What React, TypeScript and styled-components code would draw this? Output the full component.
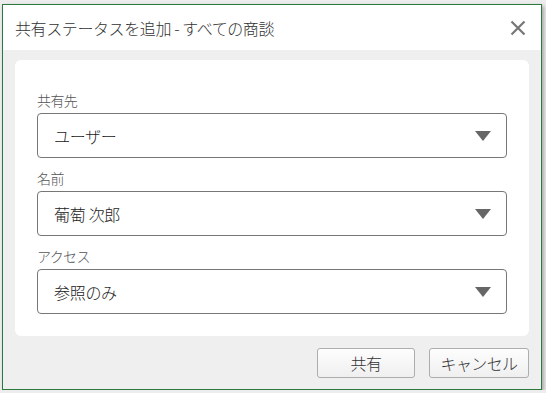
import styled, { createGlobalStyle } from 'styled-components'

const GlobalStyle = createGlobalStyle`
  html, body {
    margin: 0;
    padding: 0;
    background: #ededed;
  }
  * {
    box-sizing: border-box;
  }
`

const Window = styled.div`
  margin: 4px 0 0 2px;
  width: 540px;
  height: 386px;
  border: 1px solid #2b7a3d;
  background: #efefef;
  display: flex;
  flex-direction: column;
  box-shadow: 2px 2px 4px rgba(0, 0, 0, 0.3);
  font-family: 'Noto Sans CJK JP', 'Noto Sans', sans-serif;
  font-weight: 300;
`
const TitleBar = styled.div`
  height: 45px;
  background: #fff;
  display: flex;
  align-items: center;
  justify-content: space-between;
  padding: 0 14px 0 12px;
  flex-shrink: 0;
`
const Title = styled.div`
  font-size: 16px;
  line-height: 20px;
  color: #333;
  letter-spacing: -0.4px;
  margin-top: 1px;
`
const CloseBtn = styled.div`
  width: 18px;
  height: 18px;
  display: flex;
  align-items: center;
  justify-content: center;
`
const Body = styled.div`
  flex: 1;
  padding: 10px 12px 12px;
  display: flex;
  flex-direction: column;
  gap: 12px;
`
const Card = styled.div`
  background: #fff;
  border-radius: 6px;
  padding: 30px 22px 22px;
  display: flex;
  flex-direction: column;
`
const Field = styled.div<{ $first?: boolean }>`
  margin-top: ${(p) => (p.$first ? '0' : '10px')};
`
const Label = styled.div`
  font-size: 14px;
  line-height: 20px;
  color: #555;
  margin-bottom: 3px;
  letter-spacing: -0.6px;
`
const Select = styled.div`
  height: 45px;
  border: 1px solid #777;
  border-radius: 4px;
  display: flex;
  align-items: center;
  justify-content: space-between;
  padding: 0 15px 0 16px;
`
const SelectText = styled.span`
  font-size: 16px;
  line-height: 20px;
  color: #222;
  letter-spacing: -0.3px;
`
const Footer = styled.div`
  display: flex;
  justify-content: flex-end;
  gap: 14px;
`
const Button = styled.button<{ $w: number }>`
  width: ${(p) => p.$w}px;
  height: 30px;
  border: 1px solid #adadad;
  border-radius: 3px;
  background: linear-gradient(#fdfdfd, #efefef);
  font-family: inherit;
  font-weight: inherit;
  font-size: 16px;
  line-height: 20px;
  color: #333;
  padding: 0;
  letter-spacing: -0.6px;
`

const Arrow = () => (
  <svg width="16" height="10" viewBox="0 0 16 10">
    <polygon points="0,0 16,0 8,10" fill="#666" />
  </svg>
)

const fields = [
  { label: '共有先', value: 'ユーザー' },
  { label: '名前', value: '葡萄 次郎' },
  { label: 'アクセス', value: '参照のみ' },
]

const App = () => {
  return (
    <>
      <GlobalStyle />
      <Window>
        <TitleBar>
          <Title>共有ステータスを追加 - すべての商談</Title>
          <CloseBtn>
            <svg width="16" height="16" viewBox="0 0 16 16">
              <path d="M1.5 1.5 L14.5 14.5 M14.5 1.5 L1.5 14.5" stroke="#777" strokeWidth="2.2" />
            </svg>
          </CloseBtn>
        </TitleBar>
        <Body>
          <Card>
            {fields.map((f, i) => (
              <Field key={f.label} $first={i === 0}>
                <Label>{f.label}</Label>
                <Select>
                  <SelectText>{f.value}</SelectText>
                  <Arrow />
                </Select>
              </Field>
            ))}
          </Card>
          <Footer>
            <Button $w={98}>共有</Button>
            <Button $w={100}>キャンセル</Button>
          </Footer>
        </Body>
      </Window>
    </>
  )
}
export default App
